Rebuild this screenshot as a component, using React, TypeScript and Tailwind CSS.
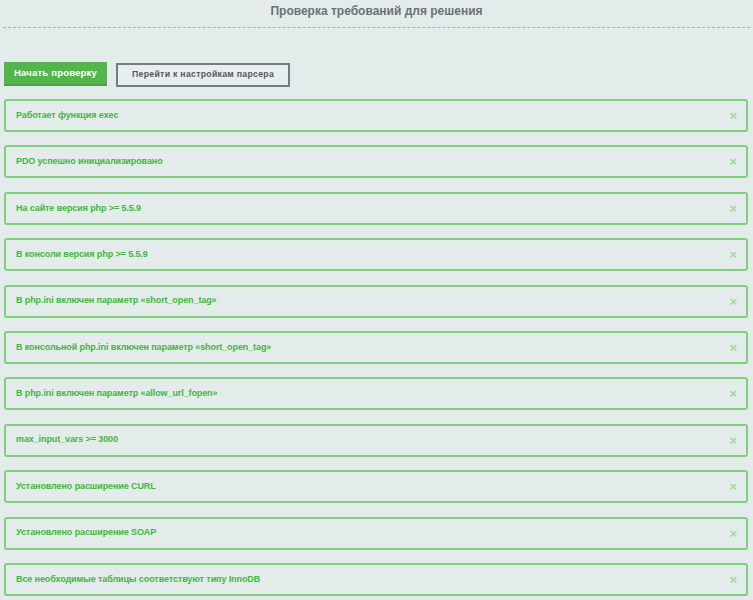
import React from "react";

const items = [
  "Работает функция exec",
  "PDO успешно инициализировано",
  "На сайте версия php >= 5.5.9",
  "В консоли версия php >= 5.5.9",
  "В php.ini включен параметр «short_open_tag»",
  "В консольной php.ini включен параметр «short_open_tag»",
  "В php.ini включен параметр «allow_url_fopen»",
  "max_input_vars >= 3000",
  "Установлено расширение CURL",
  "Установлено расширение SOAP",
  "Все необходимые таблицы соответствуют типу InnoDB",
];

function CheckRow({ text }: { text: string }) {
  return (
    <div className="h-[33px] border-2 border-[#80d17c] rounded-[3px] flex items-center justify-between pl-[10px] pr-[9px]">
      <span className="text-[9px] font-bold tracking-[-0.1px] text-[#3fb83a]">{text}</span>
      <span className="text-[13px] font-bold text-[#a3d8a0] leading-none">×</span>
    </div>
  );
}

export default function App() {
  return (
    <div className="min-h-screen bg-[#e4ebeb] font-['Liberation_Sans',Arial,sans-serif] pb-4">
      <div className="pt-[2px] pb-[7px] text-center text-[12px] font-bold text-[#6c7176]">
        Проверка требований для решения
      </div>
      <div className="mx-[3px] border-t border-dashed border-[#a9b0b4]" />
      <div className="flex gap-[9px] px-[4px] mt-[34px]">
        <button className="h-[24px] px-[10px] bg-[#53b54b] text-white text-[9.5px] font-bold tracking-[0.2px] border-b-2 border-[#4aa343]">
          Начать проверку
        </button>
        <button className="h-[24px] mt-[1px] px-[14px] border-2 border-[#747b81] bg-[#e8eded] text-[#55595e] text-[8.7px] font-bold tracking-[0.3px]">
          Перейти к настройкам парсера
        </button>
      </div>
      <div className="flex flex-col gap-[13.4px] mx-[4px] mr-[5px] mt-[12px]">
        {items.map((t) => (
          <CheckRow key={t} text={t} />
        ))}
      </div>
    </div>
  );
}
